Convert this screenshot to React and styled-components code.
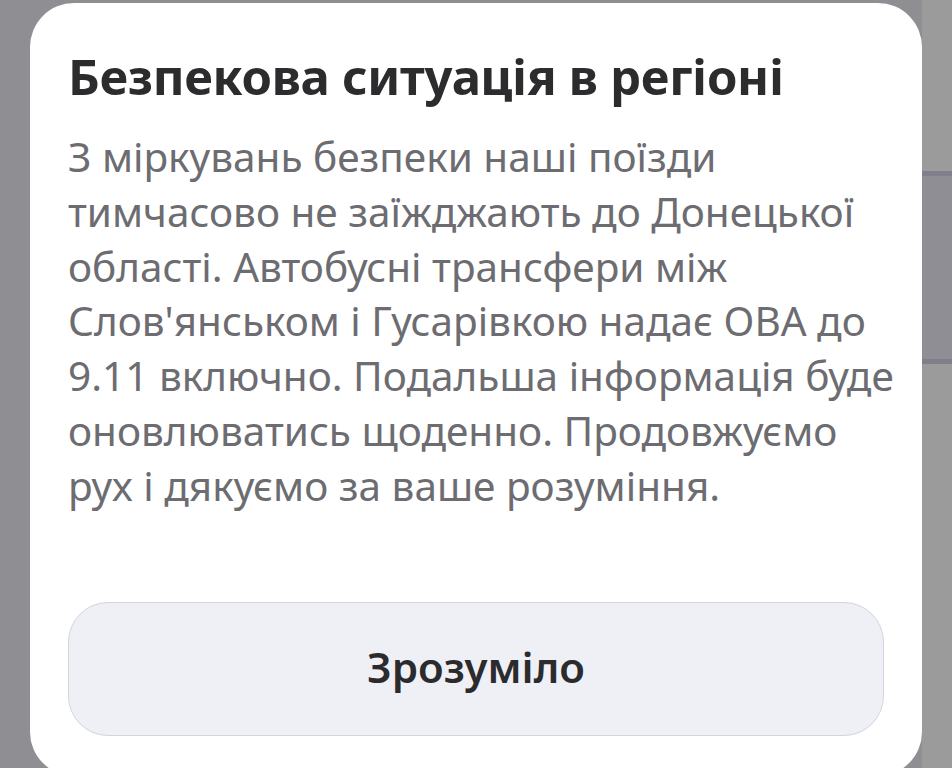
import React from "react";
import styled, { createGlobalStyle } from "styled-components";

const GlobalStyle = createGlobalStyle`
  html, body {
    margin: 0;
    padding: 0;
    height: 100%;
  }
  body {
    overflow: hidden;
    font-family: "Noto Sans", "Open Sans", sans-serif;
    background-color: #8e8e93;
    background-image: linear-gradient(
      to bottom,
      #9b9b9c 0px,
      #9b9b9c 171px,
      #80808a 171px,
      #80808a 176px,
      #8e8e94 176px,
      #8e8e94 359px,
      #7f7f87 359px,
      #7f7f87 364px,
      #9b9b9c 364px
    );
    background-size: 30px 100%;
    background-position: right top;
    background-repeat: no-repeat;
  }
`;

const Sheet = styled.div`
  box-sizing: border-box;
  margin: 3px 30px 0;
  height: 773px;
  padding: 41px 38px 0;
  background: #ffffff;
  border-radius: 44px;
  display: flex;
  flex-direction: column;
`;

const Title = styled.h2`
  margin: 0;
  font-size: 49px;
  line-height: 64px;
  font-weight: 700;
  color: #2c2c2e;
  letter-spacing: -0.3px;
`;

const Message = styled.p`
  margin: 22px 0 0;
  font-size: 40.5px;
  line-height: 54.8px;
  font-weight: 400;
  color: #6c6c71;
  white-space: nowrap;
`;

const Actions = styled.div`
  margin-top: auto;
  margin-bottom: 40px;
`;

const Button = styled.button`
  box-sizing: border-box;
  width: 100%;
  height: 134px;
  padding: 0 0 6px;
  border: 1.5px solid #d3d4db;
  border-radius: 40px;
  background: #eff0f5;
  font-family: inherit;
  font-size: 42px;
  font-weight: 600;
  color: #2b2b2e;
  cursor: pointer;
`;

const lines = [
  "З міркувань безпеки наші поїзди",
  "тимчасово не заїжджають до Донецької",
  "області. Автобусні трансфери між",
  "Слов'янськом і Гусарівкою надає ОВА до",
  "9.11 включно. Подальша інформація буде",
  "оновлюватись щоденно. Продовжуємо",
  "рух і дякуємо за ваше розуміння.",
];

export default function App() {
  return (
    <>
      <GlobalStyle />
      <Sheet>
        <Title>Безпекова ситуація в регіоні</Title>
        <Message>
          {lines.map((line, i) => (
            <React.Fragment key={i}>
              {line}
              {i < lines.length - 1 && <br />}
            </React.Fragment>
          ))}
        </Message>
        <Actions>
          <Button>Зрозуміло</Button>
        </Actions>
      </Sheet>
    </>
  );
}
